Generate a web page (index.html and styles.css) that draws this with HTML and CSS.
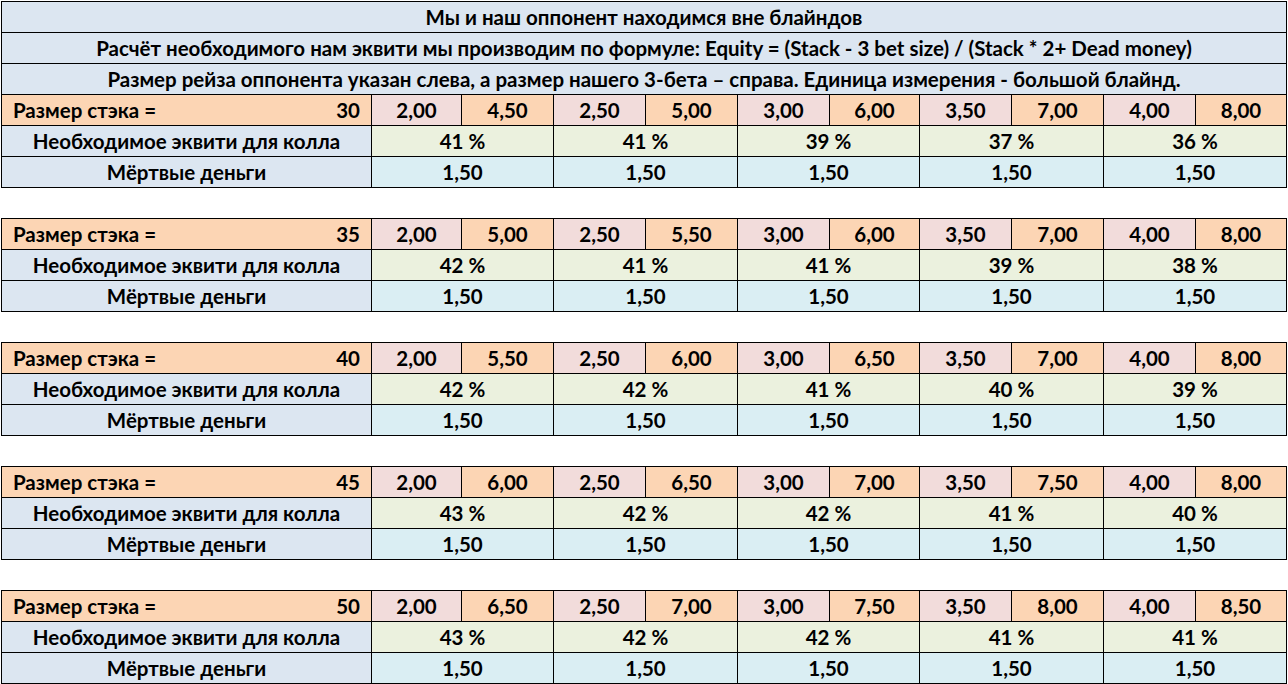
FILE: index.html
```html
<!DOCTYPE html>
<html lang="ru">
<head>
<meta charset="utf-8">
<title>Эквити</title>
<link rel="stylesheet" href="styles.css">
</head>
<body>
<table class="sheet">
<colgroup><col class="c-label"><col class="c90"><col class="c92"><col class="c92"><col class="c92"><col class="c92"><col class="c90"><col class="c92"><col class="c92"><col class="c92"><col class="c91"></colgroup>
<tr><td class="head" colspan="11">Мы и наш оппонент находимся вне блайндов</td></tr>
<tr><td class="head" colspan="11">Расчёт необходимого нам эквити мы производим по формуле: Equity = (Stack - 3 bet size) / (Stack * 2+ Dead money)</td></tr>
<tr><td class="head" colspan="11">Размер рейза оппонента указан слева, а размер нашего 3-бета – справа. Единица измерения - большой блайнд.</td></tr>
<tr><td class="stack"><div class="stack-in"><span>Размер стэка =</span><span>30</span></div></td><td class="raise">2,00</td><td class="bet">4,50</td><td class="raise">2,50</td><td class="bet">5,00</td><td class="raise">3,00</td><td class="bet">6,00</td><td class="raise">3,50</td><td class="bet">7,00</td><td class="raise">4,00</td><td class="bet">8,00</td></tr>
<tr><td class="label">Необходимое эквити для колла</td><td class="eq" colspan="2">41 %</td><td class="eq" colspan="2">41 %</td><td class="eq" colspan="2">39 %</td><td class="eq" colspan="2">37 %</td><td class="eq" colspan="2">36 %</td></tr>
<tr><td class="label">Мёртвые деньги</td><td class="dead" colspan="2">1,50</td><td class="dead" colspan="2">1,50</td><td class="dead" colspan="2">1,50</td><td class="dead" colspan="2">1,50</td><td class="dead" colspan="2">1,50</td></tr>
</table>

<table class="sheet block">
<colgroup><col class="c-label"><col class="c90"><col class="c92"><col class="c92"><col class="c92"><col class="c92"><col class="c90"><col class="c92"><col class="c92"><col class="c92"><col class="c91"></colgroup>
<tr><td class="stack"><div class="stack-in"><span>Размер стэка =</span><span>35</span></div></td><td class="raise">2,00</td><td class="bet">5,00</td><td class="raise">2,50</td><td class="bet">5,50</td><td class="raise">3,00</td><td class="bet">6,00</td><td class="raise">3,50</td><td class="bet">7,00</td><td class="raise">4,00</td><td class="bet">8,00</td></tr>
<tr><td class="label">Необходимое эквити для колла</td><td class="eq" colspan="2">42 %</td><td class="eq" colspan="2">41 %</td><td class="eq" colspan="2">41 %</td><td class="eq" colspan="2">39 %</td><td class="eq" colspan="2">38 %</td></tr>
<tr><td class="label">Мёртвые деньги</td><td class="dead" colspan="2">1,50</td><td class="dead" colspan="2">1,50</td><td class="dead" colspan="2">1,50</td><td class="dead" colspan="2">1,50</td><td class="dead" colspan="2">1,50</td></tr>
</table>

<table class="sheet block">
<colgroup><col class="c-label"><col class="c90"><col class="c92"><col class="c92"><col class="c92"><col class="c92"><col class="c90"><col class="c92"><col class="c92"><col class="c92"><col class="c91"></colgroup>
<tr><td class="stack"><div class="stack-in"><span>Размер стэка =</span><span>40</span></div></td><td class="raise">2,00</td><td class="bet">5,50</td><td class="raise">2,50</td><td class="bet">6,00</td><td class="raise">3,00</td><td class="bet">6,50</td><td class="raise">3,50</td><td class="bet">7,00</td><td class="raise">4,00</td><td class="bet">8,00</td></tr>
<tr><td class="label">Необходимое эквити для колла</td><td class="eq" colspan="2">42 %</td><td class="eq" colspan="2">42 %</td><td class="eq" colspan="2">41 %</td><td class="eq" colspan="2">40 %</td><td class="eq" colspan="2">39 %</td></tr>
<tr><td class="label">Мёртвые деньги</td><td class="dead" colspan="2">1,50</td><td class="dead" colspan="2">1,50</td><td class="dead" colspan="2">1,50</td><td class="dead" colspan="2">1,50</td><td class="dead" colspan="2">1,50</td></tr>
</table>

<table class="sheet block">
<colgroup><col class="c-label"><col class="c90"><col class="c92"><col class="c92"><col class="c92"><col class="c92"><col class="c90"><col class="c92"><col class="c92"><col class="c92"><col class="c91"></colgroup>
<tr><td class="stack"><div class="stack-in"><span>Размер стэка =</span><span>45</span></div></td><td class="raise">2,00</td><td class="bet">6,00</td><td class="raise">2,50</td><td class="bet">6,50</td><td class="raise">3,00</td><td class="bet">7,00</td><td class="raise">3,50</td><td class="bet">7,50</td><td class="raise">4,00</td><td class="bet">8,00</td></tr>
<tr><td class="label">Необходимое эквити для колла</td><td class="eq" colspan="2">43 %</td><td class="eq" colspan="2">42 %</td><td class="eq" colspan="2">42 %</td><td class="eq" colspan="2">41 %</td><td class="eq" colspan="2">40 %</td></tr>
<tr><td class="label">Мёртвые деньги</td><td class="dead" colspan="2">1,50</td><td class="dead" colspan="2">1,50</td><td class="dead" colspan="2">1,50</td><td class="dead" colspan="2">1,50</td><td class="dead" colspan="2">1,50</td></tr>
</table>

<table class="sheet block">
<colgroup><col class="c-label"><col class="c90"><col class="c92"><col class="c92"><col class="c92"><col class="c92"><col class="c90"><col class="c92"><col class="c92"><col class="c92"><col class="c91"></colgroup>
<tr><td class="stack"><div class="stack-in"><span>Размер стэка =</span><span>50</span></div></td><td class="raise">2,00</td><td class="bet">6,50</td><td class="raise">2,50</td><td class="bet">7,00</td><td class="raise">3,00</td><td class="bet">7,50</td><td class="raise">3,50</td><td class="bet">8,00</td><td class="raise">4,00</td><td class="bet">8,50</td></tr>
<tr><td class="label">Необходимое эквити для колла</td><td class="eq" colspan="2">43 %</td><td class="eq" colspan="2">42 %</td><td class="eq" colspan="2">42 %</td><td class="eq" colspan="2">41 %</td><td class="eq" colspan="2">41 %</td></tr>
<tr><td class="label">Мёртвые деньги</td><td class="dead" colspan="2">1,50</td><td class="dead" colspan="2">1,50</td><td class="dead" colspan="2">1,50</td><td class="dead" colspan="2">1,50</td><td class="dead" colspan="2">1,50</td></tr>
</table>
</body>
</html>
```

FILE: styles.css
```css
html, body {
  margin: 0;
  padding: 0;
  background: #ffffff;
}
body {
  padding: 1px 0 0 1px;
  font-family: Lato, "Liberation Sans", sans-serif;
  font-weight: 700;
  font-size: 20.5px;
  color: #000;
}
.sheet {
  border-collapse: collapse;
  table-layout: fixed;
  width: 1286px;
}
.block {
  margin-top: 30px;
}
.c-label { width: 370px; }
.c90 { width: 90px; }
.c91 { width: 91px; }
.c92 { width: 92px; }
.sheet td {
  border: 1px solid #000;
  height: 30px;
  padding: 0;
  text-align: center;
  vertical-align: middle;
  white-space: nowrap;
  overflow: hidden;
  line-height: 30px;
}
.head { background: #dce6f1; }
.label { background: #dce6f1; }
.stack { background: #fcd5b4; }
.stack-in {
  display: flex;
  justify-content: space-between;
  padding: 0 11px 0 11px;
}
.raise { background: #f2dcdb; }
.bet { background: #fcd5b4; }
.eq { background: #ebf1de; }
.dead { background: #daeef3; }
```
